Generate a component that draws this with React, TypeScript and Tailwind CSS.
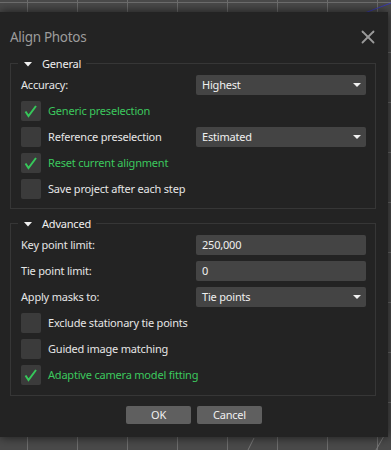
import { X } from 'lucide-react';

const font = "font-['Noto_Sans','Open_Sans',sans-serif]";

function Check({ checked }: { checked: boolean }) {
  return (
    <span className="flex size-[20px] shrink-0 items-center justify-center rounded-[2px] bg-[#3b3b3b]">
      {checked && (
        <svg width="20" height="20" viewBox="0 0 20 20">
          <path d="M4.5 10.5 L7.5 15 L15 5" fill="none" stroke="#36c85a" strokeWidth="2" />
        </svg>
      )}
    </span>
  );
}

function CheckRow({ label, checked }: { label: string; checked: boolean }) {
  return (
    <div className="flex h-[20px] items-center">
      <Check checked={checked} />
      <span className={`ml-[7px] ${checked ? 'text-[#3cc85e]' : 'text-[#e6e6e6]'}`}>{label}</span>
    </div>
  );
}

function Field({ children, dropdown }: { children: React.ReactNode; dropdown?: boolean }) {
  return (
    <div className="flex h-[20px] w-[170px] items-center justify-between rounded-[2px] bg-[#444444] pl-[6px] pr-[5px] text-[#f0f0f0]">
      <span>{children}</span>
      {dropdown && (
        <svg width="8" height="4" viewBox="0 0 8 4">
          <path d="M0 0 H8 L4 4 Z" fill="#f0f0f0" />
        </svg>
      )}
    </div>
  );
}

function LabelRow({ label, children }: { label: string; children: React.ReactNode }) {
  return (
    <div className="flex h-[20px] items-center">
      <span className="w-[175px] text-[#e6e6e6]">{label}</span>
      {children}
    </div>
  );
}

function Group({ title, children }: { title: string; children: React.ReactNode }) {
  return (
    <div className="relative w-[366px] border border-[#363636] pl-[10px] pr-[9px] pt-[11px]">
      <div className="absolute -top-[8px] left-[7px] flex h-[16px] items-center bg-[#232323] pl-[6px] pr-[5px] text-[#f0f0f0]">
        <svg width="8" height="5" viewBox="0 0 8 5">
          <path d="M0 0 H8 L4 4.5 Z" fill="#f0f0f0" />
        </svg>
        <span className="ml-[10px]">{title}</span>
      </div>
      {children}
    </div>
  );
}

export default function App() {
  return (
    <div
      className={`relative h-[450px] w-[391px] overflow-hidden bg-[#4a4a4a] bg-[linear-gradient(to_right,#6e6e6e_1px,transparent_1px),linear-gradient(to_bottom,#6e6e6e_1px,transparent_1px)] bg-[size:50px_50px] bg-[position:27px_2px] pt-[12px] text-[11px] tracking-[-0.2px] ${font}`}
    >
      <svg className="absolute left-0 top-0" width="391" height="450" viewBox="0 0 391 450">
        <path d="M362 14 L391 3" stroke="#3b3bb0" strokeWidth="1" />
        <path d="M248 450 L254 438" stroke="#7a7a7a" strokeWidth="1" />
        <path d="M376 450 L384 436" stroke="#7a7a7a" strokeWidth="1" />
      </svg>
      <div className="relative flex h-[425px] w-[388px] flex-col bg-[#232323] px-[10px] shadow-[0_0_10px_rgba(0,0,0,0.7)]">
        <div className="flex h-[44px] items-center justify-between pt-[6px]">
          <span className="text-[13.5px] tracking-[-0.3px] text-[#9c9c9c]">Align Photos</span>
          <X className="-mr-[1px] size-[22px] text-[#9a9a9a]" strokeWidth={2} />
        </div>

        <div className="mt-[7px]">
          <Group title="General">
            <div className="flex flex-col gap-[6px] pb-[9px]">
              <LabelRow label="Accuracy:">
                <Field dropdown>Highest</Field>
              </LabelRow>
              <CheckRow label="Generic preselection" checked />
              <div className="flex h-[20px] items-center">
                <div className="flex w-[175px] items-center">
                  <Check checked={false} />
                  <span className="ml-[7px] text-[#e6e6e6]">Reference preselection</span>
                </div>
                <Field dropdown>Estimated</Field>
              </div>
              <CheckRow label="Reset current alignment" checked />
              <CheckRow label="Save project after each step" checked={false} />
            </div>
          </Group>
        </div>

        <div className="mt-[14px]">
          <Group title="Advanced">
            <div className="flex flex-col gap-[6px] pb-[10px]">
              <LabelRow label="Key point limit:">
                <Field>250,000</Field>
              </LabelRow>
              <LabelRow label="Tie point limit:">
                <Field>0</Field>
              </LabelRow>
              <LabelRow label="Apply masks to:">
                <Field dropdown>Tie points</Field>
              </LabelRow>
              <CheckRow label="Exclude stationary tie points" checked={false} />
              <CheckRow label="Guided image matching" checked={false} />
              <CheckRow label="Adaptive camera model fitting" checked />
            </div>
          </Group>
        </div>

        <div className="mt-[10px] flex justify-center gap-[6px]">
          <button className="h-[18px] w-[65px] rounded-[2px] bg-[#5f5f5f] text-[#f0f0f0]">OK</button>
          <button className="h-[18px] w-[65px] rounded-[2px] bg-[#5f5f5f] text-[#f0f0f0]">Cancel</button>
        </div>
      </div>
    </div>
  );
}
